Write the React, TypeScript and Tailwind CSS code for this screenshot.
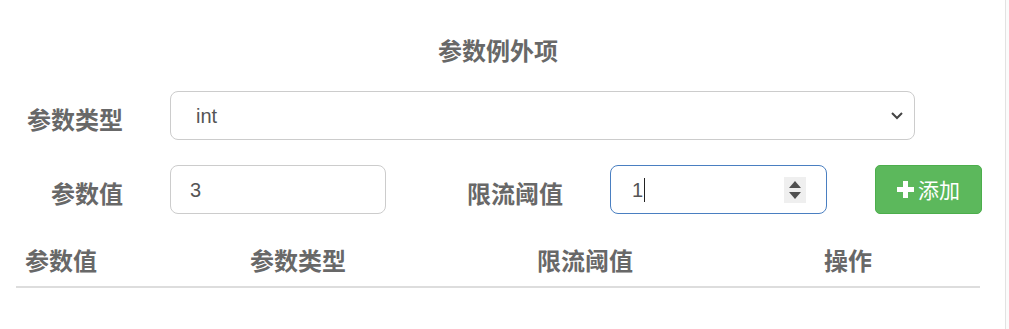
import React from "react";

const cjk = { fontFamily: '"Microsoft YaHei", "Noto Sans CJK SC", "Liberation Sans", sans-serif' };
const latin = { fontFamily: '"Liberation Sans", Arial, sans-serif' };

function Chevron() {
  return (
    <svg width="14" height="9" viewBox="0 0 14 9">
      <polyline points="2,2 7,7 12,2" fill="none" stroke="#444" strokeWidth="2" />
    </svg>
  );
}

function Spinner() {
  return (
    <div className="w-[22px] h-[26px] bg-[#efefef] flex flex-col items-center justify-center gap-[4px]">
      <svg width="12" height="7" viewBox="0 0 12 7">
        <polygon points="6,0 12,7 0,7" fill="#505050" />
      </svg>
      <svg width="12" height="7" viewBox="0 0 12 7">
        <polygon points="0,0 12,0 6,7" fill="#505050" />
      </svg>
    </div>
  );
}

function PlusIcon() {
  return (
    <svg width="17" height="17" viewBox="0 0 17 17">
      <rect x="6" y="0" width="5" height="17" fill="#fff" />
      <rect x="0" y="6" width="17" height="5" fill="#fff" />
    </svg>
  );
}

export default function App() {
  const labelCls = "text-[24px] font-bold text-[#686868] text-right pt-[6px] shrink-0";
  return (
    <div className="w-[1009px] h-[329px] flex bg-white overflow-hidden" style={cjk}>
      <div className="w-[1005px] shrink-0 pt-[35px]">
        <div className="w-[964px] ml-4">
          <div className="h-[30px] leading-[30px] text-center text-[24px] font-bold text-[#686868]">
            参数例外项
          </div>

          <div className="flex items-center mt-[26px]">
            <div className={`${labelCls} w-[107px]`}>参数类型</div>
            <div className="ml-[47px] w-[745px] h-[49px] border border-[#cccccc] rounded-[8px] flex items-center justify-between pl-[25px] pr-[10px] shrink-0">
              <span className="text-[20px] text-[#555]" style={latin}>int</span>
              <Chevron />
            </div>
          </div>

          <div className="flex items-center mt-[25px]">
            <div className={`${labelCls} w-[107px]`}>参数值</div>
            <div className="ml-[47px] w-[216px] h-[49px] border border-[#cccccc] rounded-[8px] flex items-center pl-[19px] shrink-0">
              <span className="text-[20px] text-[#555]" style={latin}>3</span>
            </div>
            <div className={`${labelCls} w-[177px]`}>限流阈值</div>
            <div className="ml-[47px] w-[217px] h-[49px] border border-[#4a7fc1] rounded-[8px] flex items-center justify-between pl-[21px] pr-[20px] shrink-0">
              <span className="flex items-center text-[20px] text-[#555]" style={latin}>
                1<span className="w-px h-[24px] bg-[#222] ml-[1px]" />
              </span>
              <Spinner />
            </div>
            <button className="ml-[48px] w-[107px] h-[49px] shrink-0 bg-[#5cb85c] border border-[#4cae4c] rounded-[5px] flex items-center justify-center gap-[4px] text-white text-[21px]">
              <PlusIcon />
              <span>添加</span>
            </button>
          </div>

          <div className="mt-[31px] h-[43px] border-b-2 border-[#dddddd] flex text-[24px] font-bold text-[#686868]">
            <div className="w-[225px] pl-[9px] leading-[30px]">参数值</div>
            <div className="w-[287px] pl-[9px] leading-[30px]">参数类型</div>
            <div className="w-[287px] pl-[9px] leading-[30px]">限流阈值</div>
            <div className="flex-1 pl-[9px] leading-[30px]">操作</div>
          </div>
        </div>
      </div>
      <div className="flex-1 border-l border-[#e2e2e2] bg-[#fbfbfb]" />
    </div>
  );
}
